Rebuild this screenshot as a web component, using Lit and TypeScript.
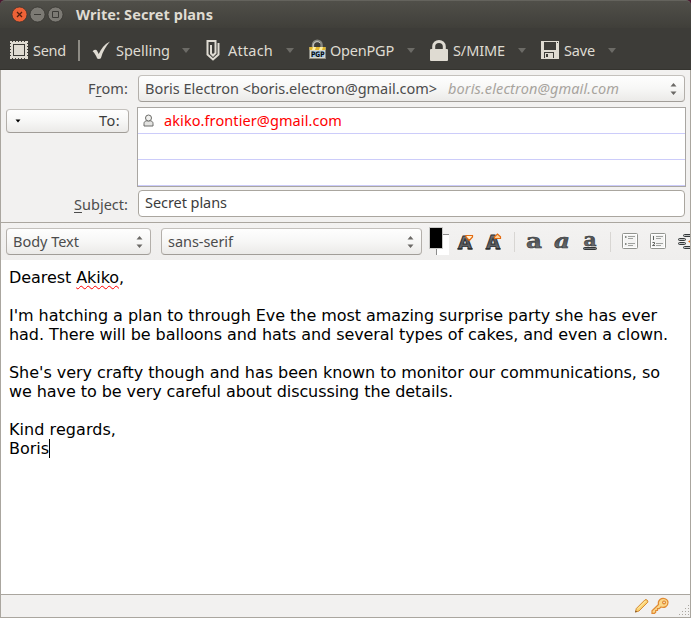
import { LitElement, html, css, svg, TemplateResult } from "lit";
import { customElement, property } from "lit/decorators.js";

/** A single-line label whose tracking is adjusted to fill a given width. */
@customElement("fit-label")
class FitLabel extends LitElement {
  @property({ type: Number }) width = 50;

  static styles = css`
    :host {
      display: block;
      flex: none;
      white-space: pre;
      line-height: 20px;
      height: 20px;
    }
    span {
      display: inline-block;
    }
  `;

  firstUpdated() {
    const span = this.renderRoot.querySelector("span") as HTMLElement;
    const count = (this.textContent || "").length;
    const natural = span.getBoundingClientRect().width;
    span.style.letterSpacing = `${(this.width - natural) / count}px`;
    this.style.width = `${this.width}px`;
  }

  render() {
    return html`<span><slot></slot></span>`;
  }
}

interface Tool {
  label: string;
  lead: number;
  iconWidth: number;
  gap: number;
  width: number;
  caretGap?: number;
  icon: TemplateResult;
}

const stampIcon = html`<svg width="18" height="18" viewBox="0 0 18 18" shape-rendering="crispEdges">
  <path fill="#dfdbd2" d="M0 0h18v18H0z" />
  <path fill="none" stroke="#3d3c38" d="M3.500 3.500h11v11h-11z" />
  <path fill="none" stroke="#3d3c38" stroke-dasharray="1 2" d="M2 .5h15M2 17.500h15M.5 2v15M17.500 2v15" />
</svg>`;
const checkIcon = html`<svg width="19" height="20" viewBox="0 0 19 20">
  <path fill="#dfdbd2" d="M.6 11.2C2.6 9.4 4.4 9.5 5.2 11l1.500 3.100C9.100 8.700 12.500 4.300 18 1.600 13.700 6.500 10.900 11.500 8.900 18.200c-1 .9-2.700 1-3.700.3C4.200 16 2.800 13 .6 11.200Z" />
</svg>`;
const clipIcon = html`<svg width="14" height="21" viewBox="0 0 14 21">
  <path fill="none" stroke="#dfdbd2" stroke-width="2" d="M1.500 1h8v12L7 15.500 5 13.500V5" />
  <path fill="none" stroke="#dfdbd2" stroke-width="2" d="M1.500 0v14.500L7 19.500l5.500-5V3" />
</svg>`;
const pgpIcon = html`<svg width="17" height="20" viewBox="0 0 17 20">
  <path d="M4 8V5a4.300 4.300 0 0 1 8.600 0v3" fill="none" stroke="#85867f" stroke-width="2.400" />
  <path d="M4.200 7V5a4 4 0 0 1 7-2" fill="none" stroke="#c8c9c2" />
  <path fill="#d8d8cf" d="M.5 7h16v12H.5z" />
  <path fill="#e0b52d" d="M.5 7h16v3H.5z" />
  <path fill="#fff0a2" d="M4 7h3l-1 3H3zm7 0h3l-1 3h-3z" />
  <path fill="#9dc3e2" d="M2 11h13v6H2z" />
  <path fill="#928f80" d="M1 18h15v1H1z" />
  <text x="2" y="16.700" textLength="13.500" lengthAdjust="spacingAndGlyphs" font-family="DejaVu Sans" font-size="7.500" font-weight="700" fill="#080808">PGP</text>
</svg>`;
const lockIcon = html`<svg width="18" height="21" viewBox="0 0 18 21">
  <path fill="none" stroke="#dfdbd2" stroke-width="3" d="M3.700 10V6.500a5.300 5 0 0 1 10.600 0V10" />
  <rect y="9" width="18" height="12" rx="1" fill="#dfdbd2" />
</svg>`;
const saveIcon = html`<svg width="18" height="18" viewBox="0 0 18 18" shape-rendering="crispEdges">
  <path fill="#dfdbd2" fill-rule="evenodd" d="M0 0h18v18H0zM3 1v8h12V1zM3 11v6h10v-6z" />
  <path fill="#dfdbd2" d="M4 12h8v5H4z" />
  <path fill="#3d3c38" d="M5 13h2v3H5z" />
  <path fill="#3d3c38" d="M16 1h1v1h-1z" />
</svg>`;

const tools: Tool[] = [
  { label: "Send", lead: 10, iconWidth: 18, gap: 5, width: 33, icon: stampIcon },
  { label: "Spelling", lead: 12, iconWidth: 19, gap: 5, width: 54, caretGap: 12, icon: checkIcon },
  { label: "Attach", lead: 16, iconWidth: 14, gap: 8, width: 45, caretGap: 13, icon: clipIcon },
  { label: "OpenPGP", lead: 15, iconWidth: 16, gap: 5, width: 64, caretGap: 13, icon: pgpIcon },
  { label: "S/MIME", lead: 15, iconWidth: 18, gap: 5, width: 52, caretGap: 13, icon: lockIcon },
  { label: "Save", lead: 15, iconWidth: 18, gap: 5, width: 31, caretGap: 13, icon: saveIcon },
];

const stepper = html`<svg class="stepper" width="7" height="14" viewBox="0 0 7 14">
  <path fill="#6b6966" d="M.5 4.500 3.500 1l3 3.500zM.5 9.500h6l-3 3.500z" />
</svg>`;

const letterGradient = svg`<defs><linearGradient id="g" x1="0" y1="0" x2="0" y2="1">
  <stop offset="0" stop-color="#8b8d90" /><stop offset=".5" stop-color="#505356" /><stop offset="1" stop-color="#7b7d80" />
</linearGradient></defs>`;

const sizeLetter = (size: number, arrow: TemplateResult) => html`<svg width="18" height="18" viewBox="0 0 18 18">
  ${letterGradient}
  <text x="1" y="16" font-family="DejaVu Sans" font-size=${size} font-weight="700" textLength="14"
    lengthAdjust="spacingAndGlyphs" fill="url(#g)" stroke="#2c2f31" stroke-width=".9">A</text>
  <path stroke="#2c2f31" stroke-width="1.500" d="M.5 15.700h5M10.500 15.700h5" />
  ${arrow}
</svg>`;

const styleLetter = (x: number, y: number, size: number, italic: boolean, extra?: TemplateResult) => html`<svg width="18" height="18" viewBox="0 0 18 18">
  ${letterGradient}
  <text x=${x} y=${y} font-family="DejaVu Serif" font-size=${size} font-weight="700" font-style=${italic ? "italic" : "normal"}
    textLength=${size > 18 ? 16 : 13} lengthAdjust="spacingAndGlyphs" fill="url(#g)" stroke="#2c2f31" stroke-width=".5">a</text>
  ${extra ?? ""}
</svg>`;

const listIcon = (marks: TemplateResult) => html`<svg width="17" height="17" viewBox="0 0 17 17">
  <rect x=".5" y=".5" width="15" height="15" rx="1" fill="#f4f4f3" stroke="#92948f" />
  <rect x="1.500" y="1.500" width="13" height="13" fill="none" stroke="#fff" />
  <path stroke="#a0a29f" d="M6 3.500h7M6 5.500h5M6 10.500h7M6 12.500h5" fill="none" />
  ${marks}
</svg>`;

@customElement("app-root")
class AppRoot extends LitElement {
  static styles = css`
    :host {
      display: block;
      width: 691px;
      height: 618px;
      font-family: "Noto Sans", sans-serif;
      font-size: 14.5px;
      color: #4c4c4c;
    }
    * {
      box-sizing: border-box;
    }
    svg {
      display: block;
      flex: none;
      overflow: visible;
    }
    .window {
      display: flex;
      flex-direction: column;
      height: 618px;
      overflow: hidden;
      background: #f2f1f0;
    }
    .titlebar {
      display: flex;
      align-items: center;
      height: 28px;
      flex: none;
      padding-left: 12px;
      border-top: 1px solid #64635d;
      border-radius: 5px 5px 0 0;
      background: linear-gradient(#504f49, #403f3a);
      color: #dfdbd2;
      font-weight: 700;
    }
    .titlebar fit-label {
      margin-top: -2px;
    }
    .backdrop {
      background: #4b1730;
    }
    .controls {
      display: flex;
      gap: 3px;
      margin-right: 13px;
    }
    .toolbar {
      display: flex;
      align-items: center;
      height: 42px;
      flex: none;
      padding-top: 3px;
      border-bottom: 1px solid #35342f;
      background: #3d3c38;
      color: #dfdbd2;
    }
    .tool {
      display: flex;
      align-items: center;
      height: 38px;
    }
    .glyph {
      display: flex;
    }
    .rule {
      width: 2px;
      height: 21px;
      margin-left: 12px;
      background: #8e8c85;
    }
    .content {
      display: flex;
      flex-direction: column;
      flex: 1;
      min-height: 0;
      border: solid #aaa69f;
      border-width: 0 1px 1px;
    }
    .headers {
      display: grid;
      grid-template-columns: 128px 549px;
      grid-template-rows: 27px 80px 27px;
      column-gap: 8px;
      row-gap: 5px;
      height: 153px;
      flex: none;
      padding-top: 5px;
      border-bottom: 1px solid #aaa69f;
    }
    .caption {
      display: flex;
      justify-content: flex-end;
      padding-right: 1px;
    }
    .from {
      padding-top: 3px;
    }
    .subj {
      padding-top: 2px;
    }
    .key {
      text-decoration: underline;
      text-underline-offset: 2px;
      text-decoration-thickness: 1px;
    }
    .select,
    .button {
      display: flex;
      align-items: center;
      border: 1px solid #b3afaa;
      border-top-color: #c4c1bd;
      border-bottom-color: #a19d98;
      border-radius: 4px;
      background: linear-gradient(#fefefe, #f7f7f6 50%, #ebeae8);
    }
    .select fit-label,
    .button fit-label,
    .recipient fit-label {
      margin-top: -2px;
    }
    .identity {
      margin: 0 1px;
      padding: 0 7px 0 6px;
    }
    .alias {
      margin-left: 11px;
      color: #a8a49e;
      font-style: italic;
    }
    .stepper {
      margin-left: auto;
    }
    .kind {
      justify-content: space-between;
      width: 123px;
      height: 24px;
      margin: 2px 0 0 5px;
      padding: 0 8px;
      color: #3c3c3c;
    }
    .recipients {
      display: flex;
      flex-direction: column;
      border: 1px solid #a9a6a2;
      background: #fff;
    }
    .recipient {
      display: flex;
      align-items: center;
      height: 26px;
      border-bottom: 1px solid #ccccfa;
      padding-left: 5px;
      color: #f00;
    }
    .recipient svg {
      margin-right: 10px;
    }
    .subject {
      display: flex;
      height: 27px;
      margin: -2px 1px 0;
      padding: 1px 0 0 6px;
      border: 1px solid #aaa69f;
      border-radius: 4px;
      background: #fff;
      color: #3c3c3c;
    }
    .formatbar {
      display: flex;
      align-items: center;
      height: 37px;
      flex: none;
      overflow: hidden;
      padding-left: 5px;
      background: linear-gradient(#f3f2f1, #efeeed);
    }
    .format {
      flex: none;
      height: 27px;
      padding: 0 7px 0 6px;
    }
    .para {
      width: 145px;
      margin-right: 10px;
    }
    .face {
      width: 261px;
      margin-right: 7px;
    }
    .size {
      margin-left: 10px;
    }
    .list {
      margin-left: 11px;
    }
    .swatch {
      margin-right: -2px;
    }
    .divider {
      width: 1px;
      height: 20px;
      flex: none;
      background: #d8d6d3;
      margin: 0 11px;
    }
    .divider.narrow {
      margin-left: 10px;
    }
    .editor {
      flex: 1;
      min-height: 0;
      padding: 8px;
      background: #fff;
      color: #000;
      font: 16px/19px "DejaVu Sans", sans-serif;
    }
    .editor fit-label {
      height: 19px;
      line-height: 19px;
    }
    .typo {
      text-decoration: underline wavy #f00 1px;
      text-decoration-skip-ink: none;
      text-underline-offset: 2px;
    }
    .last {
      display: flex;
    }
    .caret {
      width: 1px;
      height: 19px;
      background: #000;
    }
    .status {
      display: flex;
      align-items: center;
      justify-content: flex-end;
      height: 23px;
      flex: none;
      border-top: 1px solid #aaa69f;
    }
    .grip {
      align-self: flex-end;
      margin-left: 9px;
    }
  `;

  private renderTool(tool: Tool) {
    return html`<div class="tool" style="margin-left:${tool.lead}px">
        <div class="glyph" style="width:${tool.iconWidth}px;margin-right:${tool.gap}px">${tool.icon}</div>
        <fit-label .width=${tool.width}>${tool.label}</fit-label>
        ${tool.caretGap
          ? html`<svg style="margin-left:${tool.caretGap}px" width="8" height="6" viewBox="0 0 8 6"><path fill="#6c6b66" d="M0 1h8L4 6z" /></svg>`
          : html`<div class="rule"></div>`}
      </div>`;
  }

  render() {
    return html`<div class="window">
      <div class="backdrop">
        <div class="titlebar">
          <div class="controls">
            <svg width="15" height="15" viewBox="0 0 15 15"><circle cx="7.500" cy="7.500" r="7.500" fill="#ee6237" stroke="#32312d" stroke-width=".7" /><path stroke="#54200f" stroke-width="1.300" d="m5 5 5 5m0-5-5 5" /></svg>
            <svg width="15" height="15" viewBox="0 0 15 15"><circle cx="7.500" cy="7.500" r="7.500" fill="#7c7a74" stroke="#32312d" stroke-width=".7" /><path stroke="#3c3b37" d="M4 7.500h7" /></svg>
            <svg width="15" height="15" viewBox="0 0 15 15"><circle cx="7.500" cy="7.500" r="7.500" fill="#7c7a74" stroke="#32312d" stroke-width=".7" /><path fill="none" stroke="#3c3b37" d="M4.500 4.500h6v6h-6z" /></svg>
          </div>
          <fit-label .width=${137}>Write: Secret plans</fit-label>
        </div>
      </div>
      <div class="toolbar">${tools.map((t) => this.renderTool(t))}</div>
      <div class="content">
        <div class="headers">
          <div class="caption from"><fit-label .width=${40}>F<span class="key">r</span>om:</fit-label></div>
          <div class="select identity">
            <fit-label .width=${292}>Boris Electron &lt;boris.electron@gmail.com&gt;</fit-label>
            <fit-label class="alias" .width=${171}>boris.electron@gmail.com</fit-label>
            ${stepper}
          </div>
          <div class="button kind">
            <svg width="6" height="4" viewBox="0 0 6 4"><path d="M.5.5h5L3 3.500z" /></svg>
            <fit-label .width=${21}>To:</fit-label>
          </div>
          <div class="recipients">
            <div class="recipient">
              <svg width="11" height="13" viewBox="0 0 11 13">
                <path fill="#e3e3e1" stroke="#6b6b68" d="M1 12V9.500C1 7.500 2.500 7 3.500 6.800h4C8.500 7 10 7.500 10 9.500V12z" />
                <circle cx="5.500" cy="4" r="3" fill="#f0f0ee" stroke="#6b6b68" />
              </svg>
              <fit-label .width=${178}>akiko.frontier@gmail.com</fit-label>
            </div>
            <div class="recipient"></div>
            <div class="recipient"></div>
          </div>
          <div class="caption subj"><fit-label .width=${54}><span class="key">S</span>ubject:</fit-label></div>
          <div class="subject"><fit-label .width=${82}>Secret plans</fit-label></div>
        </div>
        <div class="formatbar">
          <div class="select format para"><fit-label .width=${66}>Body Text</fit-label>${stepper}</div>
          <div class="select format face"><fit-label .width=${65}>sans-serif</fit-label>${stepper}</div>
          <svg class="swatch" width="20" height="29" viewBox="0 0 20 29" shape-rendering="crispEdges">
            <path fill="#fff" d="M7 8h13v20H7z" /><path fill="none" stroke="#8c8c8c" d="M14 7.500h6M7.500 22v6" />
            <path fill="#000" stroke="#c9c9c7" d="M.5.5h13v21H.5z" />
          </svg>
          <div class="size">${sizeLetter(17, svg`<path fill="#fff0cf" stroke="#e36b12" stroke-width="1.200" d="M9 2.500h6.500V4l-3.200 3.500L9 4z" />`)}</div>
          <div class="size">${sizeLetter(19, svg`<path fill="#ffd39a" stroke="#e36b12" stroke-width="1.200" d="M9.500 5.500V3.800L12.500 1l3 2.800v1.700z" />`)}</div>
          <div class="divider"></div>
          ${styleLetter(0, 14.5, 20, false)}
          <div class="size">${styleLetter(0, 14.5, 20, true)}</div>
          <div class="size">${styleLetter(1.5, 12.5, 18, false, svg`<rect x="1.500" y="14.500" width="13" height="2" rx="1" fill="#777a7c" stroke="#303335" />`)}</div>
          <div class="divider narrow"></div>
          ${listIcon(svg`<path fill="#888b87" d="M3 3h1.500v2H3zm0 7h1.500v2H3z" />`)}
          <div class="list">${listIcon(svg`<path fill="none" stroke="#60635f" d="M3.500 3v4M2.500 9.500h2v1.500l-2 1.500H5" />`)}</div>
          <div class="list">
            <svg width="18" height="18" viewBox="0 0 18 18">
              <g fill="#bfc1c1" stroke="#34383a"><rect x="5.500" y="1.500" width="12" height="2" rx="1" /><rect x=".5" y="5.500" width="7" height="2" rx="1" /><rect x=".5" y="9.500" width="7" height="2" rx="1" /><rect x="5.500" y="13.500" width="12" height="2" rx="1" /></g>
              <path fill="#e36b12" d="m10 8.500 3-2v4z" />
            </svg>
          </div>
        </div>
        <div class="editor">
          <fit-label .width=${115}>Dearest <span class="typo">Akiko</span>,</fit-label>
          <br />
          <fit-label .width=${648}>I'm hatching a plan to through Eve the most amazing surprise party she has ever</fit-label>
          <fit-label .width=${659}>had. There will be balloons and hats and several types of cakes, and even a clown.</fit-label>
          <br />
          <fit-label .width=${651}>She's very crafty though and has been known to monitor our communications, so</fit-label>
          <fit-label .width=${444}>we have to be very careful about discussing the details.</fit-label>
          <br />
          <fit-label .width=${107}>Kind regards,</fit-label>
          <div class="last"><fit-label .width=${40}>Boris</fit-label><span class="caret"></span></div>
        </div>
        <div class="status">
          <svg width="16" height="16" viewBox="0 0 16 16">
            <path fill="#fbd372" stroke="#d58b35" d="m1.500 14 .8-3.500L11 1.800c1.300-.8 3.400.8 2.800 2.400L5 13z" />
            <path fill="none" stroke="#fff0b5" d="M4 10.500 11.500 3" /><path fill="#70542c" d="m1 14.500.7-2 1.400 1.300z" />
          </svg>
          <svg width="20" height="16" viewBox="0 0 20 16">
            <path fill="#fbd88b" stroke="#e08a34" stroke-width="1.200" fill-rule="evenodd" d="M10 1.500C13-.8 18 .8 18 4.500s-3.500 5.800-7 4.500l-1.800 1.700H7.500v1.800H5.700v1.800l-1.200 1H2v-2.600L8.500 6.500C8 4.500 8.500 2.700 10 1.500zm4 1.500a1.400 1.400 0 1 0 .1 0z" />
          </svg>
          <svg class="grip" width="11" height="12" viewBox="0 0 11 12" shape-rendering="crispEdges">
            <path fill="#aaa69f" d="M9 0h1v1H9zM6 3h1v1H6zM9 3h1v1H9zM3 6h1v1H3zM6 6h1v1H6zM9 6h1v1H9zM0 9h1v1H0zM3 9h1v1H3zM6 9h1v1H6zM9 9h1v1H9z" />
          </svg>
        </div>
      </div>
    </div>`;
  }
}
